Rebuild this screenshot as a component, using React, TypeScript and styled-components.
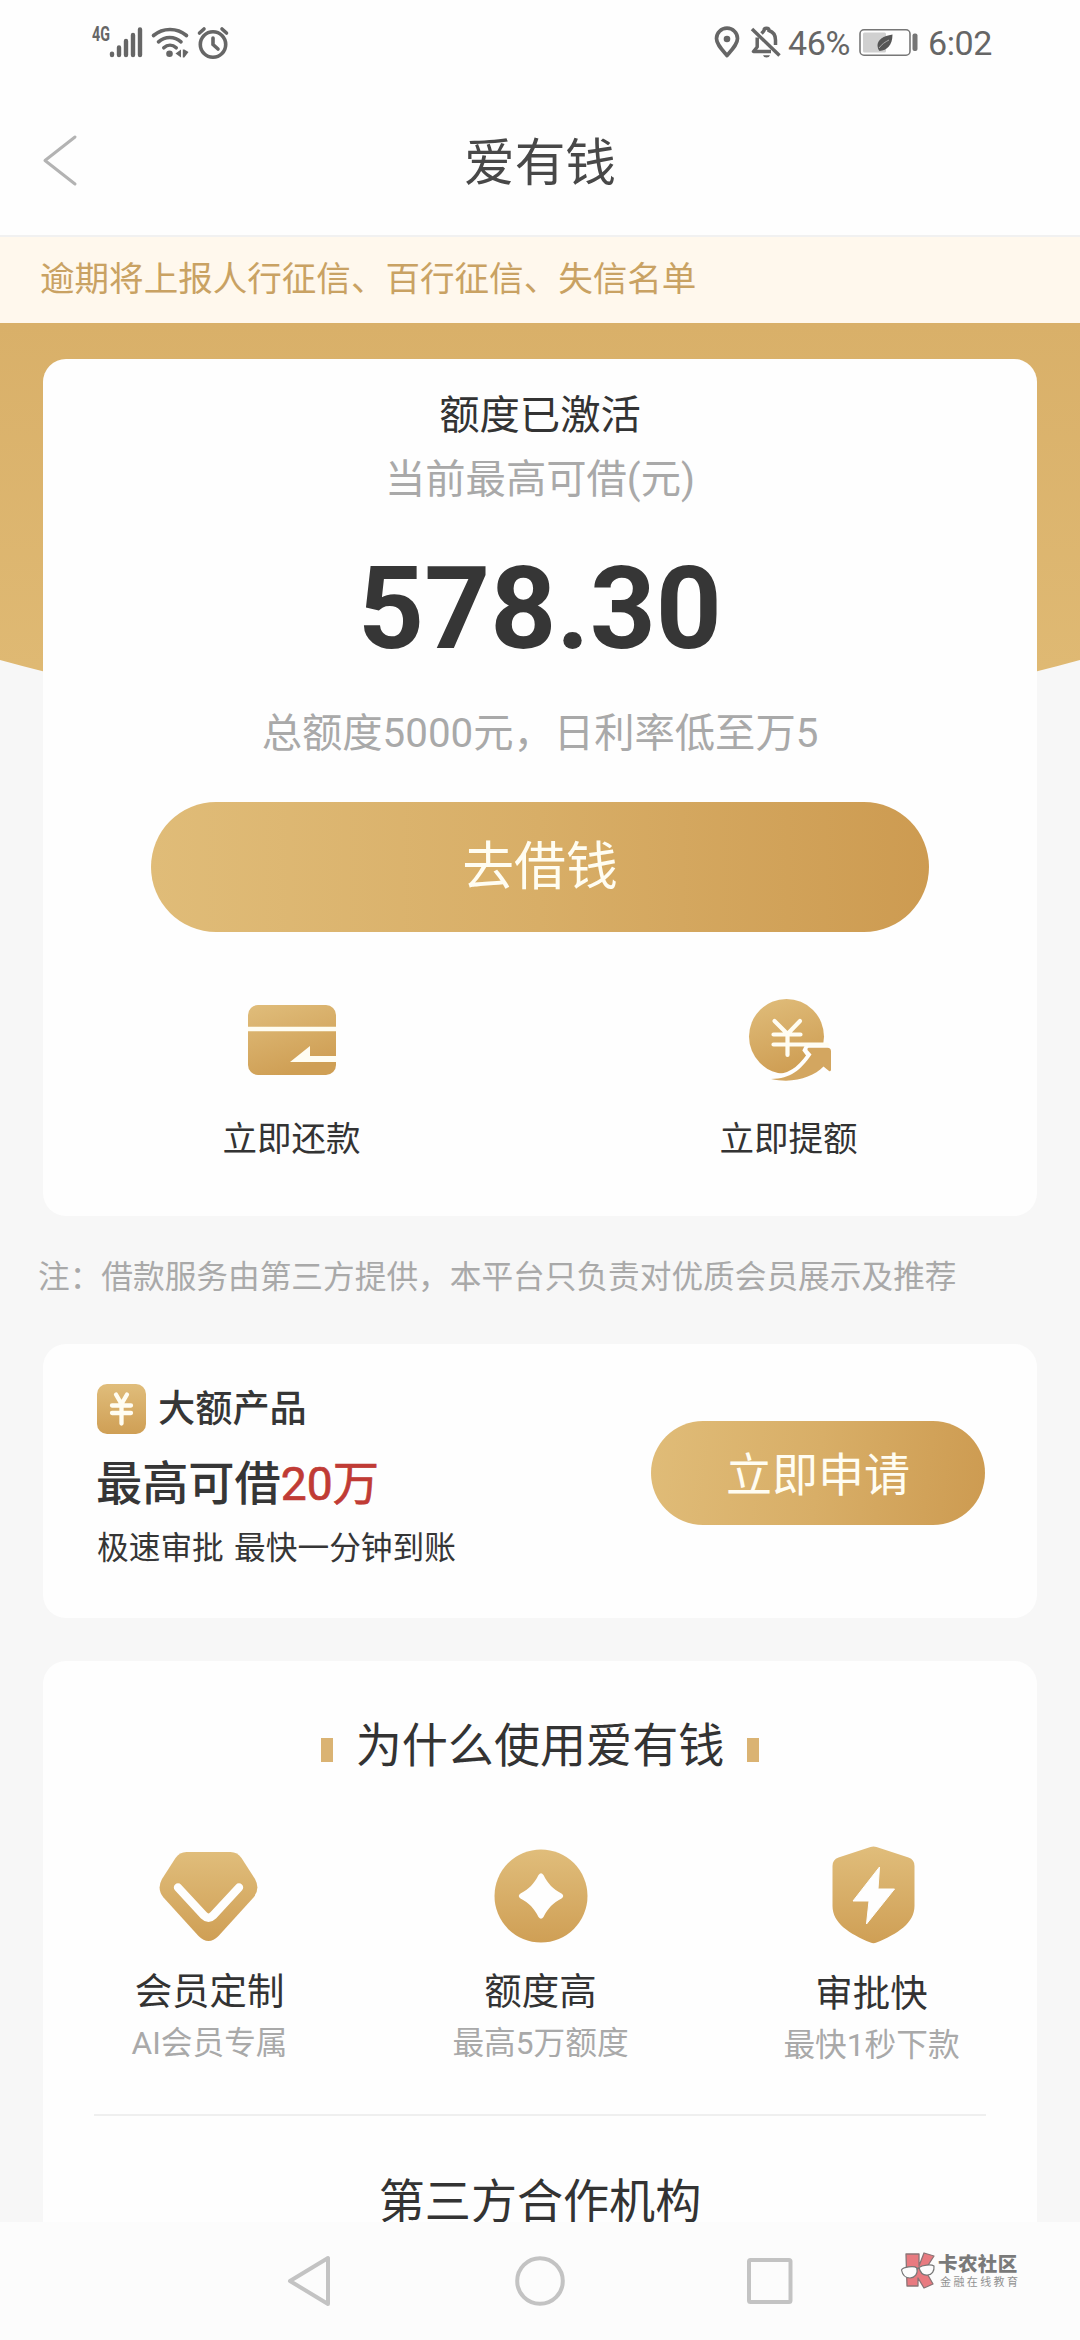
import React from "react";
import styled, { createGlobalStyle } from "styled-components";

const rem = (n: number) => `${(n * 2.88).toFixed(2)}px`;

const colors = {
  ink: "#333333",
  muted: "#a9a9a9",
  page: "#f7f7f7",
  status: "#666666",
  nav: "#c3c3c3",
};

const Global = createGlobalStyle`
  * { box-sizing: border-box; }
  body {
    margin: 0;
    background: ${colors.page};
    font-family: Roboto, "Noto Sans CJK SC", sans-serif;
    color: ${colors.ink};
  }
`;

const Screen = styled.div`
  width: 1080px;
  height: 2340px;
  display: flex;
  flex-direction: column;
  overflow: hidden;
  background: ${colors.page};
`;

/* ---------- status bar ---------- */

const StatusBar = styled.header`
  flex: none;
  height: 84px;
  padding: 0 88px 0 92px;
  display: flex;
  justify-content: space-between;
  background: #fefefe;
  color: ${colors.status};
`;

const StatusGroup = styled.div`
  display: flex;
  align-items: flex-start;
  padding-top: 24px;
`;

const NetworkType = styled.span`
  width: 18px;
  height: 20px;
  font-size: 21px;
  font-weight: 700;
  line-height: 20px;
  transform: scaleX(0.68);
  transform-origin: 0 0;
  white-space: nowrap;
`;

const StatusText = styled.span<{ $left: number }>`
  margin-left: ${(p) => p.$left}px;
  font-size: 34px;
  line-height: 38px;
  letter-spacing: -0.4px;
  white-space: nowrap;
`;

const StatusIcon = styled.svg<{ $left?: number }>`
  display: block;
  flex: none;
  margin-left: ${(p) => p.$left ?? 0}px;
  overflow: visible;
`;

/* ---------- title bar ---------- */

const TitleBar = styled.div`
  flex: none;
  height: 153px;
  padding: 0 40px;
  display: grid;
  grid-template-columns: 60px 1fr 60px;
  align-items: center;
  background: #fefefe;
  border-bottom: 2px solid #f1f1f1;
`;

const Title = styled.h1`
  margin: 0;
  padding-top: 8px;
  text-align: center;
  font-size: ${rem(17.6)};
  font-weight: 400;
  line-height: 60px;
  color: #484848;
`;

const Notice = styled.div`
  flex: none;
  height: 86px;
  padding-left: 40px;
  font-size: ${rem(12)};
  line-height: 84px;
  color: #c9a263;
  background: #fff8ed;
`;

/* ---------- body ---------- */

const Body = styled.main`
  position: relative;
  flex: 1;
  min-height: 0;
  padding: 36px 43px 0;
  display: flex;
  flex-direction: column;
  overflow: hidden;
`;

const Backdrop = styled.div`
  position: absolute;
  top: 0;
  left: 0;
  right: 0;
  height: 412px;
  background: linear-gradient(#d9b069, #dfb973 345px);
  clip-path: circle(2034px at 50% -1624px);
`;

const Card = styled.section<{ $height: number }>`
  position: relative;
  flex: none;
  height: ${(p) => p.$height}px;
  border-radius: 23px;
  background: #fefefe;
`;

const QuotaCard = styled(Card)`
  padding-top: 27px;
  display: flex;
  flex-direction: column;
  align-items: center;
`;

const QuotaText = styled.div<{ $muted?: boolean; $height: number }>`
  height: ${(p) => p.$height}px;
  line-height: ${(p) => p.$height}px;
  font-size: ${rem(14)};
  color: ${(p) => (p.$muted ? colors.muted : colors.ink)};
  white-space: nowrap;
`;

const Amount = styled.div`
  height: 190px;
  line-height: 190px;
  font-size: ${rem(40)};
  font-weight: 700;
  color: #363636;
`;

const Pill = styled.button<{ $w: number; $h: number }>`
  flex: none;
  width: ${(p) => p.$w}px;
  height: ${(p) => p.$h}px;
  padding: 0 0 5px;
  border: 0;
  border-radius: ${(p) => p.$h / 2}px;
  background: linear-gradient(97deg, #e0bc78, #d8ae67 50%, #cd9b51);
  font-family: inherit;
  font-size: 46px;
  color: #fffdf2;
`;

const BorrowButton = styled(Pill)`
  margin-top: 38px;
  padding-bottom: 9px;
  font-size: ${rem(18)};
  background: linear-gradient(90deg, #e0bc78, #d8ae67 50%, #cd9b51);
`;

const Actions = styled.div`
  width: 100%;
  display: grid;
  grid-template-columns: 1fr 1fr;
  padding-top: 58px;
`;

const Action = styled.div`
  display: flex;
  flex-direction: column;
  align-items: center;
  gap: 21px;
  font-size: ${rem(12)};
  line-height: 60px;
`;

const Footnote = styled.p`
  flex: none;
  margin: 0 0 0 -5px;
  height: 128px;
  line-height: 123px;
  font-size: ${rem(11)};
  color: ${colors.muted};
  white-space: nowrap;
`;

const OfferCard = styled(Card)`
  padding: 36px 52px 0 54px;
  display: flex;
  justify-content: space-between;
  align-items: flex-start;
`;

const OfferInfo = styled.div`
  padding-top: 4px;
  display: flex;
  flex-direction: column;
  color: #363636;
  white-space: nowrap;
`;

const OfferName = styled.div`
  display: flex;
  align-items: center;
  gap: 12px;
  height: 50px;
  font-size: 37.2px;
  font-weight: 500;
  line-height: 53px;
`;

const OfferHeadline = styled.div`
  height: 96px;
  line-height: 101px;
  font-size: 46.2px;
  font-weight: 500;
  margin-left: -1px;
`;

const Highlight = styled.span`
  font-weight: 400;
  color: #c03b35;
  -webkit-text-stroke: 0.7px #c03b35;
`;

const OfferDetail = styled.div`
  height: 36px;
  line-height: 37px;
  font-size: 31.7px;
  word-spacing: 2.5px;
`;

const OfferAction = styled.div`
  padding-top: 41px;
`;

const WhyCard = styled(Card)`
  margin-top: 43px;
  padding: 0 8px;
`;

const SectionTitle = styled.h2<{ $top: number }>`
  margin: 0;
  padding-top: ${(p) => p.$top}px;
  display: flex;
  justify-content: center;
  align-items: center;
  gap: 23px;
  font-size: ${rem(16)};
  font-weight: 400;
  line-height: 64px;
  white-space: nowrap;
`;

const Mark = styled.i`
  width: 12px;
  height: 24px;
  margin-top: 8px;
  background: #dab373;
`;

const Features = styled.div`
  margin: 67px 0 0 -8px;
  padding: 0 1px;
  height: 269px;
  display: grid;
  grid-template-columns: repeat(3, 331px);
`;

const Feature = styled.div`
  display: flex;
  flex-direction: column;
  align-items: center;
`;

const FeatureArt = styled.div<{ $height: number; $drop: number }>`
  height: ${(p) => p.$height}px;
  padding-top: ${(p) => p.$drop}px;
  margin-bottom: 16px;
`;

const FeatureName = styled.div`
  font-size: ${rem(13)};
  line-height: 54px;
`;

const FeatureNote = styled.div`
  font-size: ${rem(11)};
  line-height: 50px;
  color: ${colors.muted};
`;

const Divider = styled.hr`
  margin: 0 43px;
  border: 0;
  height: 2px;
  background: #efefef;
`;

/* ---------- navigation bar ---------- */

const NavBar = styled.nav`
  position: relative;
  flex: none;
  height: 118px;
  padding: 30px 0 0 284px;
  display: flex;
  background: #fcfcfc;
`;

const NavKey = styled.svg<{ $gap?: number }>`
  display: block;
  flex: none;
  margin-right: ${(p) => p.$gap ?? 0}px;
`;

const Watermark = styled.div`
  position: absolute;
  left: 900px;
  top: 30px;
  display: flex;
  gap: 2px;
`;

const WatermarkText = styled.div`
  display: flex;
  flex-direction: column;
  white-space: nowrap;
`;

const WatermarkName = styled.span`
  font-size: 19.5px;
  font-weight: 900;
  line-height: 26px;
  letter-spacing: 0.4px;
  color: #7a7a7a;
`;

const WatermarkTag = styled.span`
  padding-left: 2px;
  font-size: 11px;
  line-height: 9px;
  letter-spacing: 2.4px;
  color: #929292;
`;

/* ---------- drawings ---------- */

const GoldFill = ({ id, tilt = 0 }: { id: string; tilt?: number }) => (
  <defs>
    <linearGradient id={id} x1="0" y1="0" x2={tilt} y2="1">
      <stop offset="0" stopColor="#e0bd7b" />
      <stop offset="1" stopColor="#cf9f55" />
    </linearGradient>
  </defs>
);

const SignalIcon = () => (
  <StatusIcon width="32" height="36" viewBox="0 0 32 36" stroke={colors.status} strokeWidth="4.4" strokeLinecap="round">
    <path d="M2 29.6V31M9 23.5V31M16 17V31M23 11V31M30 5.5V31" />
  </StatusIcon>
);

const WifiIcon = () => (
  <StatusIcon $left={9} width="38" height="36" viewBox="0 0 38 36" fill="none" stroke={colors.status} strokeWidth="3.6" strokeLinecap="round">
    <path d="M2.500 11.500C12 3.500 26 3.500 35.500 11.500M7.500 17.800C14 12 23.500 12 30 17.800M12.800 23.800C16.500 20.300 21.500 20.300 25.200 23.800" />
    <circle cx="18.500" cy="29.700" r="3.300" fill={colors.status} stroke="none" />
    <path d="M30 25.500V33.500L24.500 29.500ZM31.800 25.500H33.300L37.500 28L33.300 33.500H31.800Z" fill={colors.status} stroke="none" />
  </StatusIcon>
);

const AlarmIcon = () => (
  <StatusIcon $left={8} width="32" height="36" viewBox="0 0 32 36" fill="none" stroke={colors.status} strokeWidth="3.600" strokeLinecap="round">
    <circle cx="16" cy="20.500" r="12.700" />
    <path d="M2.500 9L7 5M29.500 9L25 5" />
    <path d="M16 14V20.500L21 25" />
  </StatusIcon>
);

const PinIcon = () => (
  <StatusIcon width="26" height="36" viewBox="0 0 26 36" fill="none" stroke={colors.status} strokeWidth="3.700">
    <path d="M13 31.500C7 24.500 2.500 20 2.500 14.500A10.500 10.300 0 0 1 23.500 14.500C23.500 20 19 24.500 13 31.500Z" strokeLinejoin="round" />
    <circle cx="13" cy="15" r="3.300" fill={colors.status} stroke="none" />
  </StatusIcon>
);

const MutedBellIcon = () => (
  <StatusIcon $left={11} width="30" height="36" viewBox="0 0 30 36" fill="none" stroke={colors.status} strokeWidth="3.500">
    <path d="M1 5L28.500 31.500" />
    <path d="M10.500 9.500C12 8 12.500 7.500 13 6.500C13 3.400 18 3.400 18 6.500C22.500 8 24.500 11.500 24.500 16V21" />
    <path d="M6.200 13.500V23L2.500 27.500H20" strokeLinejoin="round" />
    <path d="M12 31.200H19A3.600 3 0 0 1 12 31.200Z" fill={colors.status} stroke="none" />
  </StatusIcon>
);

const BatteryIcon = () => (
  <StatusIcon $left={9} width="58" height="36" viewBox="0 0 58 36">
    <rect x="1" y="5.800" width="50" height="25.400" rx="4" fill="none" stroke="#777" strokeWidth="1.600" />
    <rect x="4" y="8.500" width="23" height="20" rx="1.500" fill="#d0d0d0" />
    <rect x="53.500" y="9.500" width="5" height="17.500" rx="2" fill="#757575" />
    <path d="M33.500 10.500C24 12 19 15.500 18.500 21C18.500 24 19.500 26 20.500 27C28 26.500 33.500 21 33.500 10.500Z" fill="#555" />
    <path d="M20 24C23 20 26 18 30 16" stroke="#aaa" strokeWidth="1" fill="none" />
  </StatusIcon>
);

const CardIcon = () => (
  <svg width="88" height="98" viewBox="0 0 88 98">
    <GoldFill id="card" tilt={0.4} />
    <rect x="0" y="15" width="88" height="70" rx="10" fill="url(#card)" />
    <path d="M0 39H88" stroke="#fffdf2" strokeWidth="4.500" />
    <path d="M42 72L62 56V66H88V72Z" fill="#fffdf2" />
  </svg>
);

const CoinIcon = () => (
  <svg width="88" height="98" viewBox="6 0 88 98" overflow="visible">
    <GoldFill id="coin" tilt={0.3} />
    <circle cx="47.500" cy="46.500" r="37.500" fill="url(#coin)" />
    <path
      d="M69 58H88.500Q92 58 92 61.500V81L84.500 76C74 87 55 94 32 89C52 88.500 61 80.500 72 65.500L68 60Z"
      fill="#fefefe"
      stroke="#fefefe"
      strokeWidth="8"
    />
    <path d="M35.500 31L48.500 44L61 31M48.500 44V65M34.500 44.500H61.500M34.500 54.500H88" fill="none" stroke="#fffdf2" strokeWidth="4.200" strokeLinecap="round" />
    <path d="M69.500 57.800H88.500Q92 57.800 92 61.500V79.500Q92 82 90 81L84.500 76.500C74 87 55 94 32 89C52 88.500 61 80.500 72.500 64.500L68.500 60Q68 58 69.500 57.800Z" fill="#d3a660" />
  </svg>
);

const YenBadge = () => (
  <svg width="49" height="50" viewBox="0 0 49 50">
    <GoldFill id="yen" />
    <rect width="49" height="50" rx="10" fill="url(#yen)" />
    <path d="M19 10.500L24.500 20L30 10.500M24.500 20V39.500M15 21.500H34M15 29H34" fill="none" stroke="#fffdf2" strokeWidth="4.300" strokeLinecap="round" strokeLinejoin="round" />
  </svg>
);

const DiamondIcon = () => (
  <svg width="98" height="92" viewBox="1.500 0 98 92" overflow="visible">
    <GoldFill id="diamond" />
    <path d="M27 0H71Q78 0 82 6L95.500 27Q101 37 94 45.500L59 84Q49 94 39 84L4 45.500Q-3 37 2.500 27L16 6Q20 0 27 0Z" fill="url(#diamond)" />
    <path d="M18.500 35.500L44.500 63.500Q49 68 53.500 63.500L79.500 35.500" fill="none" stroke="#fefefe" strokeWidth="8.400" strokeLinecap="round" />
  </svg>
);

const StarIcon = () => (
  <svg width="94" height="94" viewBox="0 0 94 94">
    <GoldFill id="star" />
    <circle cx="47" cy="47" r="46.500" fill="url(#star)" />
    <path d="M44.500 26Q47 22.500 49.500 26C54 35 59 40 67.500 44.500Q71 47 67.500 49.500C59 54 54 59 49.500 68Q47 71.500 44.500 68C40 59 35 54 26.500 49.500Q23 47 26.500 44.500C35 40 40 35 44.500 26Z" fill="#fefefe" />
  </svg>
);

const ShieldIcon = () => (
  <svg width="84" height="98" viewBox="-1.500 0 84 98" overflow="visible">
    <GoldFill id="shield" />
    <path d="M39 1Q42 0 45 1L77 11.500Q83 13.500 83 20V60C83 77 66 88 45 96.500Q42 98 39 96.500C18 88 1 77 1 60V20Q1 13.500 7 11.500Z" fill="url(#shield)" />
    <path d="M48 21L21.500 55H37.500L35 78L63 43H46.500Z" fill="#fefefe" stroke="#fefefe" strokeLinejoin="round" />
  </svg>
);

const KLogo = () => (
  <svg width="36" height="38" viewBox="0 0 36 38">
    <path d="M6 2H19V14L24 1L34 4L25 18L33 32L24 36L18 26V34H7Z" fill="#e87a80" stroke="#8a7476" strokeWidth="1.300" strokeLinejoin="round" />
    <path d="M1.500 18C3 15 14 13.500 17 16C18 22 15 25.500 10 26C5 26 2.500 23 1.500 18Z" fill="#fdfdfd" stroke="#777" strokeWidth="1.200" />
    <path d="M19 15.500C22 13 31 12 34 14C34.500 19 32 23 27.500 23C22.500 23.500 20 20 19 15.500Z" fill="#fdfdfd" stroke="#777" strokeWidth="1.200" />
    <path d="M16.500 17L19.500 16" stroke="#777" strokeWidth="1.400" />
  </svg>
);

const features = [
  { name: "会员定制", note: "AI会员专属", art: <DiamondIcon />, height: 104, drop: 7 },
  { name: "额度高", note: "最高5万额度", art: <StarIcon />, height: 104, drop: 4 },
  { name: "审批快", note: "最快1秒下款", art: <ShieldIcon />, height: 106, drop: 1 },
];

export default function App() {
  return (
    <Screen>
      <Global />
      <StatusBar>
        <StatusGroup>
          <NetworkType>4G</NetworkType>
          <SignalIcon />
          <WifiIcon />
          <AlarmIcon />
        </StatusGroup>
        <StatusGroup>
          <PinIcon />
          <MutedBellIcon />
          <StatusText $left={7}>46%</StatusText>
          <BatteryIcon />
          <StatusText $left={11}>6:02</StatusText>
        </StatusGroup>
      </StatusBar>

      <TitleBar>
        <svg width="40" height="54" viewBox="0 0 40 54" fill="none" stroke="#b3b3b3" strokeWidth="3" strokeLinecap="round" strokeLinejoin="round">
          <path d="M35 4L5 27.500L35 51" />
        </svg>
        <Title>爱有钱</Title>
      </TitleBar>

      <Notice>逾期将上报人行征信、百行征信、失信名单</Notice>

      <Body>
        <Backdrop />
        <QuotaCard $height={857}>
          <QuotaText $height={60}>额度已激活</QuotaText>
          <QuotaText $height={68} $muted>当前最高可借(元)</QuotaText>
          <Amount>578.30</Amount>
          <QuotaText $height={60} $muted>总额度5000元，日利率低至万5</QuotaText>
          <BorrowButton $w={778} $h={130}>去借钱</BorrowButton>
          <Actions>
            <Action>
              <CardIcon />
              立即还款
            </Action>
            <Action>
              <CoinIcon />
              立即提额
            </Action>
          </Actions>
        </QuotaCard>

        <Footnote>注：借款服务由第三方提供，本平台只负责对优质会员展示及推荐</Footnote>

        <OfferCard $height={274}>
          <OfferInfo>
            <OfferName>
              <YenBadge />
              大额产品
            </OfferName>
            <OfferHeadline>
              最高可借<Highlight>20万</Highlight>
            </OfferHeadline>
            <OfferDetail>极速审批 最快一分钟到账</OfferDetail>
          </OfferInfo>
          <OfferAction>
            <Pill $w={334} $h={104}>立即申请</Pill>
          </OfferAction>
        </OfferCard>

        <WhyCard $height={700}>
          <SectionTitle $top={53}>
            <Mark />
            为什么使用爱有钱
            <Mark />
          </SectionTitle>
          <Features>
            {features.map((f) => (
              <Feature key={f.name}>
                <FeatureArt $height={f.height} $drop={f.drop}>{f.art}</FeatureArt>
                <FeatureName>{f.name}</FeatureName>
                <FeatureNote>{f.note}</FeatureNote>
              </Feature>
            ))}
          </Features>
          <Divider />
          <SectionTitle $top={54}>第三方合作机构</SectionTitle>
        </WhyCard>
      </Body>

      <NavBar>
        <NavKey $gap={182} width="48" height="58" viewBox="0 0 48 58" fill="none" stroke={colors.nav} strokeWidth="4" strokeLinejoin="round">
          <path d="M44 6V52L6 29Z" />
        </NavKey>
        <NavKey $gap={181} width="52" height="58" viewBox="0 0 52 58" fill="none" stroke={colors.nav} strokeWidth="4">
          <circle cx="26" cy="29" r="22.800" />
        </NavKey>
        <NavKey width="46" height="58" viewBox="0 0 46 58" fill="none" stroke={colors.nav} strokeWidth="4">
          <rect x="2" y="8" width="41.500" height="42" rx="1.500" />
        </NavKey>
        <Watermark>
          <KLogo />
          <WatermarkText>
            <WatermarkName>卡农社区</WatermarkName>
            <WatermarkTag>金融在线教育</WatermarkTag>
          </WatermarkText>
        </Watermark>
      </NavBar>
    </Screen>
  );
}
